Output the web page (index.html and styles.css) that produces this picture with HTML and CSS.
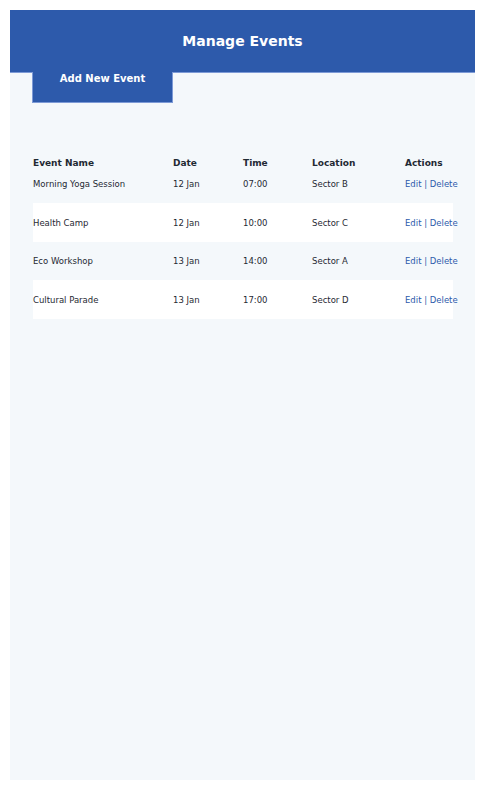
FILE: index.html
```html
<!DOCTYPE html>
<html>
<head>
<meta charset="utf-8">
<link rel="stylesheet" href="styles.css">
</head>
<body>
<div class="page">
  <header class="top">
    <h1 class="title">Manage Events</h1>
  </header>
  <div class="toolbar">
    <button class="add-btn">Add New Event</button>
  </div>
  <table class="events">
    <colgroup>
      <col class="c-name"><col class="c-date"><col class="c-time"><col class="c-loc"><col class="c-act">
    </colgroup>
    <thead>
      <tr><th>Event Name</th><th>Date</th><th>Time</th><th>Location</th><th>Actions</th></tr>
    </thead>
    <tbody>
      <tr><td>Morning Yoga Session</td><td>12 Jan</td><td>07:00</td><td>Sector B</td><td class="act"><a>Edit</a> | <a>Delete</a></td></tr>
      <tr><td>Health Camp</td><td>12 Jan</td><td>10:00</td><td>Sector C</td><td class="act"><a>Edit</a> | <a>Delete</a></td></tr>
      <tr><td>Eco Workshop</td><td>13 Jan</td><td>14:00</td><td>Sector A</td><td class="act"><a>Edit</a> | <a>Delete</a></td></tr>
      <tr><td>Cultural Parade</td><td>13 Jan</td><td>17:00</td><td>Sector D</td><td class="act"><a>Edit</a> | <a>Delete</a></td></tr>
    </tbody>
  </table>
</div>
</body>
</html>
```

FILE: styles.css
```css
html, body {
  margin: 0;
  padding: 0;
  background: #ffffff;
}
body {
  padding: 10px;
  font-family: "DejaVu Sans", sans-serif;
  color: #1f2933;
}
.page {
  width: 465px;
  min-height: 770px;
  background: #f4f8fb;
  box-sizing: border-box;
}
.top {
  position: relative;
  height: 62px;
  background: #2d5aab;
  border-bottom: 1px solid #7d9ad6;
  display: flex;
  align-items: center;
  justify-content: center;
}
.title {
  margin: 0;
  color: #ffffff;
  font-size: 14px;
  font-weight: bold;
  line-height: 16px;
}
.toolbar {
  padding-left: 22px;
  margin-top: -1px;
  display: flex;
}
.add-btn {
  position: relative;
  z-index: 1;
  width: 141px;
  height: 31px;
  box-sizing: border-box;
  margin: 0;
  padding: 0 0 17px;
  background: #2d5aab;
  color: #ffffff;
  font-family: "DejaVu Sans", sans-serif;
  font-size: 10px;
  font-weight: bold;
  line-height: 13px;
  border: 1px solid #7d9ad6;
  border-top: none;
}
.events {
  margin: 54px 0 0 23px;
  width: 420px;
  table-layout: fixed;
  border-collapse: collapse;
  font-size: 8.5px;
}
.c-name { width: 140px; }
.c-date { width: 70px; }
.c-time { width: 69px; }
.c-loc { width: 93px; }
.c-act { width: 48px; }
.events th {
  text-align: left;
  font-size: 9px;
  font-weight: bold;
  line-height: 12px;
  padding: 0;
  color: #1f2933;
}
.events td {
  padding: 13.5px 0 12.5px;
  line-height: 12.5px;
  white-space: nowrap;
  overflow: visible;
  vertical-align: middle;
}
.events tbody tr:first-child td {
  padding: 9px 0 13px;
  line-height: 12px;
}
.events tbody tr:nth-child(even) {
  background: #ffffff;
}
.act {
  color: #2d5aab;
}
.act a {
  color: #2d5aab;
}
```
